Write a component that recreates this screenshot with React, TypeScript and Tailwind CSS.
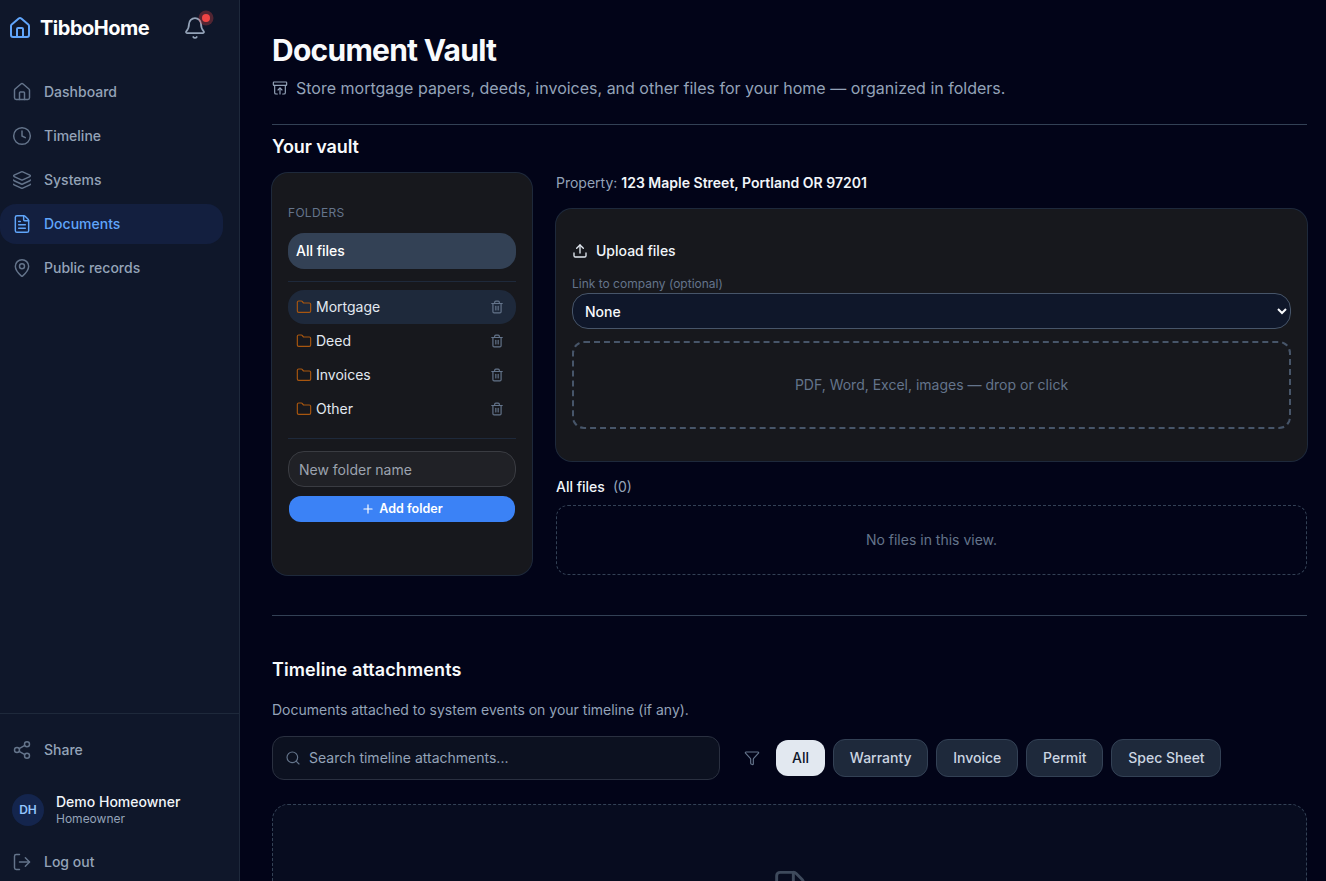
import {
  ArchiveRestore,
  Bell,
  Clock,
  File,
  FileText,
  Filter,
  Folder,
  House,
  Layers,
  LogOut,
  MapPin,
  Plus,
  Search,
  Share2,
  Trash2,
  Upload,
} from "lucide-react";

const NAV = [
  { label: "Dashboard", icon: House },
  { label: "Timeline", icon: Clock },
  { label: "Systems", icon: Layers },
  { label: "Documents", icon: FileText, active: true },
  { label: "Public records", icon: MapPin },
];

const FOLDERS = ["Mortgage", "Deed", "Invoices", "Other"];
const CHIPS = ["Warranty", "Invoice", "Permit", "Spec Sheet"];

function Sidebar() {
  return (
    <aside className="flex h-[881px] w-[240px] shrink-0 flex-col border-r border-[#1e293b] bg-[#0f172a]">
      <div className="flex h-[56px] items-center pl-[8px]">
        <House size={24} strokeWidth={2} className="text-[#60a5fa]" />
        <span className="ml-[8px] text-[20px] leading-[28px] font-bold tracking-[-0.5px] text-white">TibboHome</span>
        <div className="relative ml-[34px]">
          <Bell size={24} strokeWidth={1.75} className="text-[#94a3b8]" />
          <span className="absolute right-[-3px] top-[-2px] h-[8px] w-[8px] rounded-full bg-[#ef4444] shadow-[0_0_0_3.5px_rgba(239,68,68,0.3)]" />
        </div>
      </div>
      <nav className="mt-[16px] flex flex-col gap-[4px] pr-[16px]">
        {NAV.map((item) => (
          <div
            key={item.label}
            className={
              item.active
                ? "flex h-[40px] items-center gap-[12px] rounded-2xl bg-[#131f3f] pl-[12px] text-[#60a5fa]"
                : "flex h-[40px] items-center gap-[12px] pl-[12px] text-[#94a3b8]"
            }
          >
            <item.icon
              size={20}
              strokeWidth={1.75}
              className={item.active ? "text-[#60a5fa]" : "text-[#64748b]"}
            />
            <span className="text-sm font-medium">{item.label}</span>
          </div>
        ))}
      </nav>
      <div className="mt-auto border-t border-[#1e293b]">
        <div className="mt-[16px] flex h-[40px] items-center gap-[12px] pl-[12px] text-[#94a3b8]">
          <Share2 size={20} strokeWidth={1.75} className="text-[#64748b]" />
          <span className="text-sm font-medium">Share</span>
        </div>
        <div className="mt-[16px] flex h-[48px] items-center gap-[12px] pl-[12px]">
          <div className="flex h-[32px] w-[32px] items-center justify-center rounded-full bg-[#14254d] text-xs font-semibold text-[#93c5fd]">
            DH
          </div>
          <div className="flex flex-col">
            <span className="text-[14px] font-medium leading-[18px] text-[#f1f5f9]">Demo Homeowner</span>
            <span className="text-xs text-[#94a3b8]">Homeowner</span>
          </div>
        </div>
        <div className="mb-[-1px] mt-[8px] flex h-[40px] items-center gap-[12px] pl-[12px] text-[#94a3b8]">
          <LogOut size={20} strokeWidth={1.75} className="text-[#64748b]" />
          <span className="text-sm font-medium">Log out</span>
        </div>
      </div>
    </aside>
  );
}

function FolderCard() {
  return (
    <div className="h-[402px] w-[260px] shrink-0 rounded-2xl bg-[#17181d] px-[16px] pt-[32px] ring-1 ring-[#1e293b]">
      <p className="text-xs tracking-[0.3px] text-[#64748b]">FOLDERS</p>
      <div className="mt-[12px] flex h-[36px] items-center rounded-2xl bg-[#334155] px-[8px] text-sm font-medium text-white">
        All files
      </div>
      <div className="mt-[12px] border-t border-[#1e293b]" />
      <ul className="mt-[8px]">
        {FOLDERS.map((name, i) => (
          <li
            key={name}
            className={
              i === 0
                ? "flex h-[34px] items-center rounded-2xl bg-[#1e293b] pl-[8px] pr-[12px]"
                : "flex h-[34px] items-center pl-[8px] pr-[12px]"
            }
          >
            <Folder size={16} strokeWidth={1.75} className="text-[#a8560f]" />
            <span className="ml-[4px] text-sm text-[#e2e8f0]">{name}</span>
            <Trash2 size={14} strokeWidth={2} className="ml-auto text-[#64748b]" />
          </li>
        ))}
      </ul>
      <div className="mt-[12px] border-t border-[#1e293b]" />
      <input
        readOnly
        placeholder="New folder name"
        className="mt-[12px] block h-[36px] w-full rounded-2xl border border-[#3a3c42] bg-[#202126] px-[10px] text-sm text-white outline-none placeholder:text-[#9ca3af]"
      />
      <button className="mx-auto mt-[9px] flex h-[26px] w-[226px] items-center justify-center gap-[4px] rounded-xl bg-[#3b82f6] text-[12.5px] leading-[16px] font-semibold text-white">
        <Plus size={14} strokeWidth={2} />
        Add folder
      </button>
    </div>
  );
}

function UploadCard() {
  return (
    <div className="h-[252px] rounded-2xl bg-[#17181d] px-[16px] pt-[32px] ring-1 ring-[#1e293b]">
      <div className="flex h-[20px] items-center gap-[8px] text-sm font-medium text-[#f1f5f9]">
        <Upload size={16} strokeWidth={2} className="text-[#e2e8f0]" />
        Upload files
      </div>
      <label className="mt-[15px] block text-xs text-[#64748b]">Link to company (optional)</label>
      <select className="mt-[1px] block h-[36px] w-full rounded-2xl border border-[#475569] bg-[#0f172a] px-[8px] text-sm font-medium text-[#f8fafc] outline-none">
        <option>None</option>
      </select>
      <div className="mt-[12px] flex h-[88px] items-center justify-center rounded-xl border-2 border-dashed border-[#475569] text-sm text-[#64748b]">
        PDF, Word, Excel, images — drop or click
      </div>
    </div>
  );
}

export default function App() {
  return (
    <div
      className="flex h-[881px] w-[1326px] overflow-hidden bg-[#020418]"
      style={{ fontFamily: "Inter, 'Noto Sans', sans-serif" }}
    >
      <Sidebar />
      <main className="min-w-0 flex-1 pl-[32px] pr-[19px] pt-[32px]">
        <h1 className="text-[30px] font-bold leading-[36px] tracking-[-0.75px] text-[#f8fafc]">Document Vault</h1>
        <p className="mt-[8px] flex h-[24px] items-center gap-[8px] text-[16px] leading-[24px] text-[#94a3b8]">
          <ArchiveRestore size={16} strokeWidth={1.75} className="text-[#94a3b8]" />
          Store mortgage papers, deeds, invoices, and other files for your home — organized in folders.
        </p>
        <div className="mt-[24px] border-t border-[#334155]" />

        <h2 className="mt-[8px] text-[18px] font-semibold leading-[28px] tracking-[-0.1px] text-[#f8fafc]">Your vault</h2>

        <div className="mt-[12px] flex gap-[24px]">
          <FolderCard />
          <div className="min-w-0 flex-1">
            <p className="h-[20px] text-sm text-[#94a3b8]">
              Property: <span className="font-semibold text-[#f1f5f9]">123 Maple Street, Portland OR 97201</span>
            </p>
            <div className="mt-[16px]">
              <UploadCard />
            </div>
            <p className="mt-[16px] h-[20px] text-sm text-[#94a3b8]">
              <span className="font-medium text-[#f1f5f9]">All files</span>
              <span className="ml-[8px]">(0)</span>
            </p>
            <div className="mt-[8px] flex h-[70px] items-center justify-center rounded-xl border border-dashed border-[#334155] text-sm text-[#64748b]">
              No files in this view.
            </div>
          </div>
        </div>

        <div className="mt-[40px] border-t border-[#334155]" />

        <h2 className="mt-[40px] text-[18px] font-semibold leading-[28px] tracking-[0.1px] text-[#f8fafc]">Timeline attachments</h2>
        <p className="mt-[16px] text-sm text-[#94a3b8]">
          Documents attached to system events on your timeline (if any).
        </p>

        <div className="mt-[16px] flex items-center">
          <div className="flex h-[44px] w-[448px] items-center gap-[8px] rounded-xl border border-[#2a3040] bg-[#0c1120] pl-[12px]">
            <Search size={16} strokeWidth={1.75} className="text-[#64748b]" />
            <input
              readOnly
              placeholder="Search timeline attachments..."
              className="min-w-0 flex-1 bg-transparent text-sm text-white outline-none placeholder:text-[#94a3b8]"
            />
          </div>
          <Filter size={16} strokeWidth={1.75} className="ml-[24px] text-[#64748b]" />
          <button className="ml-[16px] h-[36px] rounded-xl bg-[#e2e8f0] px-[16px] text-sm font-medium text-[#0f172a]">
            All
          </button>
          <div className="ml-[8px] flex gap-[8px]">
            {CHIPS.map((chip) => (
              <button
                key={chip}
                className="h-[38px] rounded-xl border border-[#334155] bg-[#1e293b] px-[15.87px] text-sm font-medium text-[#cbd5e1]"
              >
                {chip}
              </button>
            ))}
          </div>
        </div>

        <div className="mt-[24px] flex h-[200px] justify-center rounded-2xl border border-dashed border-[#334155] bg-[#070c1f] pt-[64px]">
          <File size={40} strokeWidth={1.75} className="text-[#3e4a5c]" />
        </div>
      </main>
    </div>
  );
}
